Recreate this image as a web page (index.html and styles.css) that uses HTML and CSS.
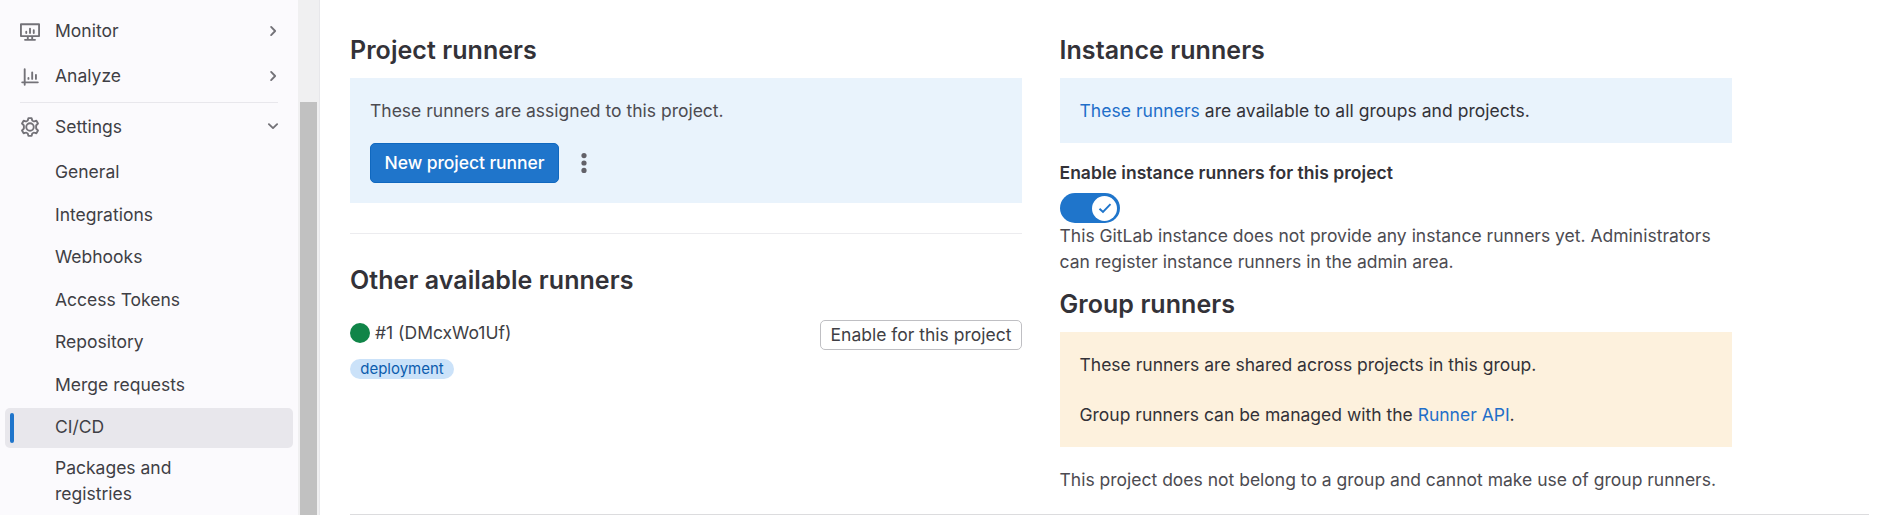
FILE: index.html
```html
<!DOCTYPE html>
<html lang="en">
<head>
<meta charset="utf-8">
<title>CI/CD Settings</title>
<link rel="stylesheet" href="styles.css">
</head>
<body>
<div class="layout">
  <aside class="sidebar">
    <nav class="nav">
      <a class="item"><svg class="icon" viewBox="0 0 16 16" fill="none" stroke="currentColor" stroke-width="1.5"><path stroke-linejoin="round" d="M.75 1.75h14.5v9.5H.75zM6.25 11.5v2.2M9.75 11.5v2.2"/><path stroke-linecap="round" d="M4 14.25h8M5 7.75v1M8 5.25v3.5M11 6.5v2.25"/></svg><span class="label">Monitor</span><svg class="chev" viewBox="0 0 16 16"><path d="M6.5 4.7 9.7 8 6.5 11.3"/></svg></a>
      <a class="item"><svg class="icon" viewBox="0 0 16 16" fill="none" stroke="currentColor" stroke-width="1.5" stroke-linecap="round"><path d="M3.75 1.75v12.5M1.75 12.25h12.5M6.75 8.75v.75M9.75 4.25V9.5M12.75 6.25V9.5"/></svg><span class="label">Analyze</span><svg class="chev" viewBox="0 0 16 16"><path d="M6.5 4.7 9.7 8 6.5 11.3"/></svg></a>
      <hr class="nav-line">
      <a class="item settings"><svg class="icon" viewBox="0 0 16 16" fill="none" stroke="currentColor" stroke-width="1.5" stroke-linejoin="round"><path d="M6.7.9h2.6L9.7 2.5q.1.3.4.5l.7.4q.3.2.6.1l1.7-.5 1.3 2.2-1.2 1.2q-.3.3-.3.6v2q0 .3.3.6l1.2 1.2-1.3 2.2-1.7-.5q-.3-.1-.6.1l-.7.4q-.3.2-.4.5l-.4 1.6H6.7l-.4-1.6q-.1-.3-.4-.5l-.7-.4q-.3-.2-.6-.1l-1.7.5-1.3-2.2 1.2-1.2q.3-.3.3-.6V7q0-.3-.3-.6L1.6 5.2 2.9 3l1.7.5q.3.1.6-.1l.7-.4q.3-.2.4-.5z"/><circle cx="8" cy="8" r="3"/></svg><span class="label">Settings</span><svg class="chev" viewBox="0 0 16 16"><path d="M4.7 6.5 8 9.7 11.3 6.5"/></svg></a>
      <div class="sub">
        <a class="subitem">General</a>
        <a class="subitem">Integrations</a>
        <a class="subitem">Webhooks</a>
        <a class="subitem">Access Tokens</a>
        <a class="subitem">Repository</a>
        <a class="subitem">Merge requests</a>
        <a class="subitem active">CI/CD</a>
        <a class="subitem two-line">Packages and registries</a>
      </div>
    </nav>
    <div class="scrollbar"><div class="thumb"></div></div>
  </aside>
  <main class="main">
    <div class="columns">
      <section class="col">
        <h4 class="title">Project runners</h4>
        <div class="box info">
          <p class="muted">These runners are assigned to this project.</p>
          <div class="actions">
            <button class="primary">New project runner</button>
            <svg class="kebab" viewBox="0 0 20 20"><circle cx="10" cy="2.6" r="2.6"/><circle cx="10" cy="10" r="2.6"/><circle cx="10" cy="17.4" r="2.6"/></svg>
          </div>
        </div>
        <hr class="line">
        <h4 class="title other">Other available runners</h4>
        <div class="runner">
          <div>
            <div class="runner-name"><span class="dot"></span><span class="runner-id">#1 (DMcxWo1Uf)</span></div>
            <span class="badge">deployment</span>
          </div>
          <button class="secondary">Enable for this project</button>
        </div>
      </section>
      <section class="col">
        <h4 class="title">Instance runners</h4>
        <div class="box info"><p class="available"><a class="link">These runners</a> are available to all groups and projects.</p></div>
        <div class="toggle-label">Enable instance runners for this project</div>
        <div class="toggle"><span class="knob"><svg class="check" viewBox="0 0 16 16"><path d="M2.5 8.7 6 12 13.5 4.2"/></svg></span></div>
        <p class="muted note">This GitLab instance does not provide any instance runners yet. Administrators can register instance runners in the admin area.</p>
        <h4 class="title group">Group runners</h4>
        <div class="box warn">
          <p>These runners are shared across projects in this group.</p>
          <p>Group runners can be managed with the <a class="link">Runner API</a>.</p>
        </div>
        <p class="muted final">This project does not belong to a group and cannot make use of group runners.</p>
      </section>
    </div>
  </main>
</div>
</body>
</html>
```
FILE: styles.css
```css
* { box-sizing: border-box; }
body { margin: 0; background: #fff; color: #333238; font: 17.5px/25px Inter, "Noto Sans", sans-serif; overflow: hidden; }
p, h4, hr { margin: 0; border: 0; }
.layout { display: flex; height: 515px; }
.sidebar { display: flex; width: 320px; background: #fbfafd; border-right: 1px solid #e7e7ea; }
.nav { width: 298px; padding: 11px 5px 0; }
.item { display: flex; align-items: center; height: 40px; padding: 0 13px; margin-bottom: 5px; color: #3f3f45; }
.icon { width: 20px; height: 20px; margin: 1px 15px 0 2px; color: #737278; }
.label { flex: 1; margin-top: -1px; }
.settings .icon { margin-top: 2px; }
.settings .label { margin-top: 1px; }
.chev { width: 20px; height: 20px; margin-right: -3px; fill: none; stroke: #737278; stroke-width: 1.5; stroke-linecap: round; stroke-linejoin: round; }
.nav-line { height: 1px; margin: 6px 15px 3px; background: #e8e7ec; }
.sub { display: flex; flex-direction: column; gap: 2.5px; padding-top: .5px; }
.subitem { position: relative; display: flex; align-items: center; height: 40px; padding-left: 50px; border-radius: 5px; color: #3f3f45; }
.active { margin-top: 1px; padding-bottom: 2.5px; background: #e8e7ec; }
.active::before { content: ""; position: absolute; left: 5px; top: 5px; width: 4px; height: 30px; border-radius: 2px; background: #1f75cb; }
.two-line { width: 220px; height: 61px; line-height: 26px; }
.scrollbar { width: 21px; padding: 102px 2px 0; background: #f0f0f1; }
.thumb { width: 17px; height: 413px; background: #c1c1c1; }
.main { flex: 1; margin-left: 30px; margin-right: 18px; border-bottom: 1px solid #dcdcde; }
.columns { display: flex; gap: 37.5px; padding-top: 35px; }
.col { width: 672px; }
.title { font-size: 25px; line-height: 30px; font-weight: 600; letter-spacing: .06px; margin-bottom: 13px; }
.box { padding: 20px; }
.info { background: #e9f3fc; }
.warn { display: flex; flex-direction: column; gap: 25px; background: #fdf1dd; }
.muted { color: #4c4b51; }
.available { letter-spacing: .04px; }
.link { color: #1f6fc9; }
.actions { display: flex; align-items: center; gap: 15px; margin-top: 20px; }
.primary { width: 189px; height: 40px; padding: 0 0 2px; border: 1px solid #1068bf; border-radius: 5px; background: #1f75cb; color: #fff; font: inherit; font-weight: 500; letter-spacing: -.07px; }
.kebab { width: 20px; height: 20px; fill: #626168; }
.line { height: 1px; margin-top: 30px; background: #ececef; }
.other { margin-top: 31px; margin-bottom: 25px; }
.runner { display: flex; justify-content: space-between; align-items: flex-start; color: #3f3f45; }
.runner-name { display: flex; align-items: center; gap: 5px; height: 26px; }
.runner-id { margin-top: -2px; }
.dot { width: 20px; height: 20px; border-radius: 50%; background: #108548; }
.badge { display: block; width: 104px; height: 20px; margin-top: 13px; border-radius: 10px; background: #cbe2f9; color: #0b5cad; font-size: 15px; line-height: 20px; text-align: center; }
.secondary { width: 202px; height: 30px; padding: 0 0 2px; border: 1px solid #bfbfc3; border-radius: 5px; background: #fff; color: #3f3f45; font: inherit; line-height: 25px; }
.toggle-label { margin-top: 17px; font-weight: 600; letter-spacing: .03px; }
.toggle { display: flex; justify-content: flex-end; width: 60px; height: 30px; margin-top: 8px; padding: 2.5px; border-radius: 15px; background: #1f75cb; }
.knob { display: flex; align-items: center; justify-content: center; width: 25px; height: 25px; border-radius: 50%; background: #fff; }
.check { width: 16px; height: 16px; fill: none; stroke: #1f75cb; stroke-width: 1.9; }
.note { line-height: 26px; }
.group { margin-top: 14px; }
.final { margin-top: 20px; }
```
